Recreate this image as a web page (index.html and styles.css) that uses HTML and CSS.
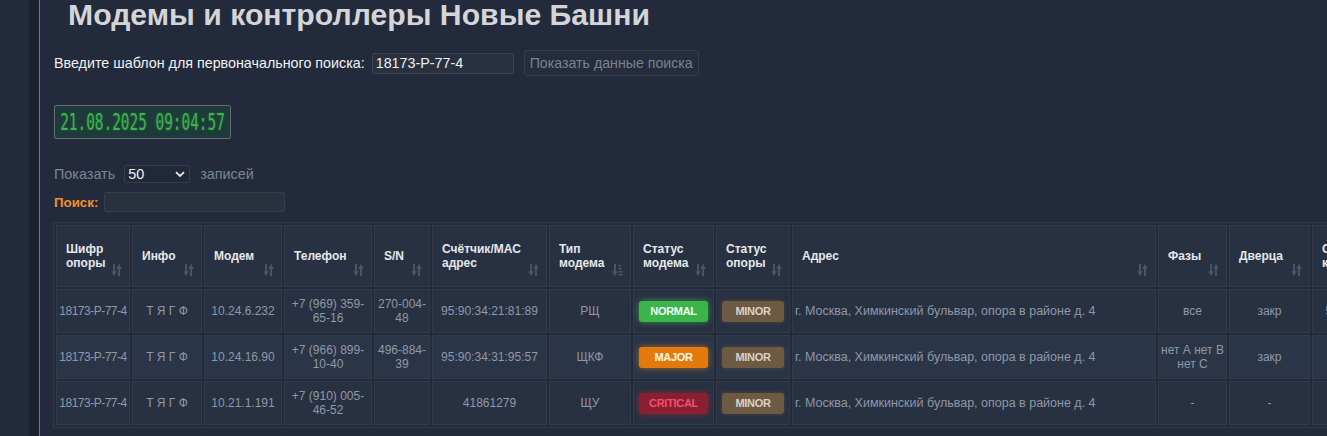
FILE: index.html
```html
<!DOCTYPE html>
<html lang="ru">
<head>
<meta charset="utf-8">
<title>Модемы и контроллеры Новые Башни</title>
<link rel="stylesheet" href="styles.css">
</head>
<body>
<div class="layout">
  <div class="rail"></div>
  <div class="rail-dark"></div>
  <div class="rail-line"></div>
  <main class="content">
    <h1 class="title">Модемы и контроллеры Новые Башни</h1>

    <div class="search-row">
      <label class="search-label" for="pattern">Введите шаблон для первоначального поиска:</label>
      <input class="pattern-input" id="pattern" type="text" value="18173-P-77-4">
      <button class="show-btn" type="button">Показать данные поиска</button>
    </div>

    <div class="clock"><span class="clock-text">21.08.2025 09:04:57</span></div>

    <div class="length-row">
      <span class="muted">Показать</span>
      <span class="select-box"><span class="select-value">50</span>
        <svg class="chevron" width="10" height="7" viewBox="0 0 10 7"><path d="M1 1.2 L5 5 L9 1.2" fill="none" stroke="#e8e8e8" stroke-width="1.8"/></svg>
      </span>
      <span class="muted">записей</span>
    </div>

    <div class="filter-row">
      <span class="filter-label">Поиск:</span>
      <input class="filter-input" type="text">
    </div>

    <table class="grid">
      <thead>
        <tr>
          <th>Шифр опоры<svg class="sort" viewBox="0 0 11 14"><use href="#sort"/></svg></th>
          <th>Инфо<svg class="sort" viewBox="0 0 11 14"><use href="#sort"/></svg></th>
          <th>Модем<svg class="sort" viewBox="0 0 11 14"><use href="#sort"/></svg></th>
          <th>Телефон<svg class="sort" viewBox="0 0 11 14"><use href="#sort"/></svg></th>
          <th>S/N<svg class="sort" viewBox="0 0 11 14"><use href="#sort"/></svg></th>
          <th>Счётчик/MAC адрес<svg class="sort" viewBox="0 0 11 14"><use href="#sort"/></svg></th>
          <th>Тип модема<svg class="sort" viewBox="0 0 11 14"><use href="#sort-desc"/></svg></th>
          <th>Статус модема<svg class="sort" viewBox="0 0 11 14"><use href="#sort"/></svg></th>
          <th>Статус опоры<svg class="sort" viewBox="0 0 11 14"><use href="#sort"/></svg></th>
          <th>Адрес<svg class="sort" viewBox="0 0 11 14"><use href="#sort"/></svg></th>
          <th>Фазы<svg class="sort" viewBox="0 0 11 14"><use href="#sort"/></svg></th>
          <th>Дверца<svg class="sort" viewBox="0 0 11 14"><use href="#sort"/></svg></th>
          <th>Связь контроллера<svg class="sort" viewBox="0 0 11 14"><use href="#sort"/></svg></th>
        </tr>
      </thead>
      <tbody>
        <tr>
          <td class="code">18173-P-77-4</td>
          <td>Т Я Г Ф</td>
          <td>10.24.6.232</td>
          <td>+7 (969) 359-65-16</td>
          <td>270-004-48</td>
          <td>95:90:34:21:81:89</td>
          <td>РЩ</td>
          <td><span class="badge badge-normal">NORMAL</span></td>
          <td><span class="badge badge-minor">MINOR</span></td>
          <td class="addr">г. Москва, Химкинский бульвар, опора в районе д. 4</td>
          <td>все</td>
          <td>закр</td>
          <td>5 мин 1 сек</td>
        </tr>
        <tr class="alt">
          <td class="code">18173-P-77-4</td>
          <td>Т Я Г Ф</td>
          <td>10.24.16.90</td>
          <td>+7 (966) 899-10-40</td>
          <td>496-884-39</td>
          <td>95:90:34:31:95:57</td>
          <td>ЩКФ</td>
          <td><span class="badge badge-major">MAJOR</span></td>
          <td><span class="badge badge-minor">MINOR</span></td>
          <td class="addr">г. Москва, Химкинский бульвар, опора в районе д. 4</td>
          <td>нет А нет В нет С</td>
          <td>закр</td>
          <td></td>
        </tr>
        <tr>
          <td class="code">18173-P-77-4</td>
          <td>Т Я Г Ф</td>
          <td>10.21.1.191</td>
          <td>+7 (910) 005-46-52</td>
          <td></td>
          <td>41861279</td>
          <td>ЩУ</td>
          <td><span class="badge badge-critical">CRITICAL</span></td>
          <td><span class="badge badge-minor">MINOR</span></td>
          <td class="addr">г. Москва, Химкинский бульвар, опора в районе д. 4</td>
          <td>-</td>
          <td>-</td>
          <td></td>
        </tr>
      </tbody>
    </table>
  </main>
</div>

<svg class="defs" width="0" height="0" aria-hidden="true">
  <defs>
    <g id="sort">
      <path d="M3 1 V11" stroke="#4b5364" stroke-width="2"/>
      <path d="M0.2 8.3 L5.8 8.3 L3 13.2 Z" fill="#4b5364"/>
      <path d="M8 3 V13" stroke="#4b5364" stroke-width="2"/>
      <path d="M5.2 5.7 L10.8 5.7 L8 0.8 Z" fill="#4b5364"/>
    </g>
    <g id="sort-desc">
      <path d="M3 1 V11" stroke="#4b5364" stroke-width="2"/>
      <path d="M0.2 8.3 L5.8 8.3 L3 13.2 Z" fill="#4b5364"/>
      <rect x="6.5" y="2" width="2.5" height="1.6" fill="#4b5364"/>
      <rect x="6.5" y="5" width="3.3" height="1.6" fill="#4b5364"/>
      <rect x="6.5" y="8" width="4" height="1.6" fill="#4b5364"/>
      <rect x="6.5" y="11" width="4.5" height="1.6" fill="#4b5364"/>
    </g>
  </defs>
</svg>
</body>
</html>
```

FILE: styles.css
```css
html, body {
  margin: 0;
  padding: 0;
  height: 100%;
  overflow: hidden;
  background: #232a3a;
  font-family: "Liberation Sans", Arial, sans-serif;
}

.layout {
  display: flex;
  min-height: 436px;
  height: 100%;
}

.rail {
  width: 29px;
  flex: none;
  background: #242b3b;
}

.rail-dark {
  width: 10px;
  flex: none;
  background: #1c222d;
}

.rail-line {
  width: 1px;
  flex: none;
  background: #2f8bd8;
}

.content {
  flex: 1;
  min-width: 0;
  padding-left: 14px;
  background: #232a3b;
}

.title {
  margin: 0 0 0 14px;
  font-size: 30.2px;
  line-height: 30px;
  font-weight: 700;
  color: #d3d5d9;
  white-space: nowrap;
}

.search-row {
  display: flex;
  align-items: center;
  height: 26px;
  margin-top: 20px;
}

.search-label {
  font-size: 14.3px;
  color: #f1f2f4;
  margin-right: 7px;
  white-space: nowrap;
}

.pattern-input {
  box-sizing: border-box;
  width: 142px;
  height: 21px;
  background: #29313f;
  border: 1px solid #3a4354;
  border-radius: 2px;
  color: #eef0f3;
  font-family: "Liberation Sans", Arial, sans-serif;
  font-size: 14.3px;
  padding: 0 3px;
  outline: none;
}

.show-btn {
  box-sizing: border-box;
  margin-left: 10px;
  height: 26px;
  width: 175px;
  padding: 0 3px;
  background: #252d3c;
  border: 1px solid #353d4c;
  border-radius: 3px;
  color: #7a8292;
  font-family: "Liberation Sans", Arial, sans-serif;
  font-size: 14.2px;
  white-space: nowrap;
}

.clock {
  box-sizing: border-box;
  margin-top: 29px;
  width: 177px;
  height: 34px;
  background: #1e3a3b;
  border: 1px solid #676d75;
  border-radius: 2px;
  display: flex;
  align-items: center;
  justify-content: center;
  overflow: hidden;
}

.clock-text {
  display: inline-block;
  font-family: "DejaVu Sans Mono", monospace;
  font-size: 14.4px;
  line-height: 14px;
  color: #3cb54a;
  transform: scaleY(1.6);
  text-shadow: 0 0 2px rgba(60, 181, 74, 0.45);
  white-space: nowrap;
}

.length-row {
  display: flex;
  align-items: center;
  height: 18px;
  margin-top: 26px;
  font-size: 14.4px;
}

.muted {
  color: #7c8595;
}

.select-box {
  box-sizing: border-box;
  display: flex;
  align-items: center;
  justify-content: space-between;
  width: 66px;
  height: 18px;
  margin: 0 10px 0 9px;
  padding: 0 4px 0 3px;
  background: #212837;
  border: 1px solid #363e4d;
  border-radius: 2px;
}

.select-value {
  color: #eef0f3;
  font-size: 14.4px;
}

.chevron {
  display: block;
}

.filter-row {
  display: flex;
  align-items: center;
  height: 20px;
  margin-top: 9px;
}

.filter-label {
  font-size: 13.3px;
  font-weight: 700;
  color: #f0922a;
  margin-right: 6px;
}

.filter-input {
  box-sizing: border-box;
  width: 181px;
  height: 20px;
  background: #29313f;
  border: 1px solid #363e4d;
  border-radius: 2px;
  outline: none;
}

.grid {
  margin-top: 10px;
  margin-left: -1px;
  border: 1px solid #313a4a;
  border-spacing: 2px;
  table-layout: fixed;
  width: 1350px;
  background: #232a3a;
}

.grid th,
.grid td {
  box-sizing: border-box;
  border: 1px solid #323b4b;
}

.grid th {
  position: relative;
  height: 62px;
  padding: 0 22px 0 9px;
  background: #283142;
  color: #e6e8ec;
  font-size: 12px;
  line-height: 14px;
  font-weight: 700;
  text-align: left;
  vertical-align: middle;
}

.grid th:nth-child(1) { width: 74px; }
.grid th:nth-child(2) { width: 70px; }
.grid th:nth-child(3) { width: 78px; }
.grid th:nth-child(4) { width: 88px; }
.grid th:nth-child(5) { width: 56px; }
.grid th:nth-child(6) { width: 115px; }
.grid th:nth-child(7) { width: 82px; }
.grid th:nth-child(8) { width: 81px; }
.grid th:nth-child(9) { width: 74px; }
.grid th:nth-child(10) { width: 364px; }
.grid th:nth-child(11) { width: 69px; }
.grid th:nth-child(12) { width: 81px; }
.grid th:nth-child(13) { width: 90px; }

.sort {
  position: absolute;
  right: 7px;
  bottom: 9px;
  width: 11px;
  height: 14px;
}

.defs {
  position: absolute;
  width: 0;
  height: 0;
}

.grid td {
  height: 44px;
  padding: 0 2px;
  background: #283142;
  color: #8f98a7;
  font-size: 12px;
  line-height: 14px;
  text-align: center;
  vertical-align: middle;
}

.grid tr.alt td {
  background: #2b3548;
}

.grid td.code {
  white-space: nowrap;
  letter-spacing: -0.5px;
}

.grid td.addr {
  text-align: left;
  white-space: nowrap;
  font-size: 12.5px;
}

.badge {
  display: inline-block;
  height: 21px;
  line-height: 21px;
  width: 69px;
  border-radius: 3px;
  font-size: 11px;
  font-weight: 700;
  letter-spacing: -0.3px;
  text-align: center;
  vertical-align: middle;
}

.badge-normal {
  background: #3bb44a;
  color: #f4fff4;
  box-shadow: 0 0 6px rgba(70, 220, 90, 0.55);
}

.badge-major {
  background: #e57a0c;
  color: #fff6ea;
  box-shadow: 0 0 6px rgba(245, 140, 20, 0.6);
}

.badge-critical {
  background: #8a1f32;
  color: #f2506a;
  box-shadow: 0 0 6px rgba(210, 40, 60, 0.5);
}

.badge-minor {
  width: 62px;
  background: #6e5a43;
  color: #dbd3c7;
  box-shadow: 0 0 4px rgba(120, 96, 66, 0.5);
}
```
